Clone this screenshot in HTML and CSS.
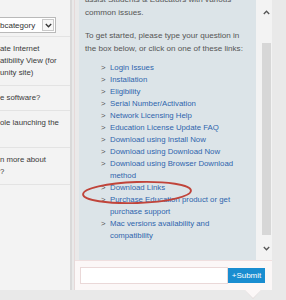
FILE: index.html
```html
<!DOCTYPE html>
<html lang="en">
<head>
    <meta charset="UTF-8">
    <meta name="viewport" content="width=device-width, initial-scale=1.0">
    <title>Support Assistant</title>
    <link rel="stylesheet" href="styles.css">
</head>
<body>

    <div class="page">
        <aside class="sidebar">
            <div class="filter">
                <div class="select">
                    <span>bcategory</span>
                    <span class="select-btn">
                        <svg width="7" height="5" viewBox="0 0 7 5"><path d="M0.8 1 L3.5 3.8 L6.2 1" fill="none" stroke="#333" stroke-width="1.3"/></svg>
                    </span>
                </div>
            </div>
            <ul class="questions">
                <li>ate Internet<br>atibility View (for<br>unity site)</li>
                <li>e software?</li>
                <li>ole launching the<br>&nbsp;</li>
                <li>n more about<br>?</li>
            </ul>
        </aside>

        <section class="chat">
            <div class="chat-body">
                <div class="messages">
                    <p class="intro">assist Students &amp; Educators with various<br>common issues.</p>
                    <p class="prompt">To get started, please type your question in<br>the box below, or click on one of these links:</p>
                    <ul class="links">
                        <li><a href="#">Login Issues</a></li>
                        <li><a href="#">Installation</a></li>
                        <li><a href="#">Eligibility</a></li>
                        <li><a href="#">Serial Number/Activation</a></li>
                        <li><a href="#">Network Licensing Help</a></li>
                        <li><a href="#">Education License Update FAQ</a></li>
                        <li><a href="#">Download using Install Now</a></li>
                        <li><a href="#">Download using Download Now</a></li>
                        <li><a href="#">Download using Browser Download method</a></li>
                        <li><a href="#">Download Links</a></li>
                        <li><a href="#">Purchase Education product or get purchase support</a></li>
                        <li><a href="#">Mac versions availability and compatibility</a></li>
                    </ul>
                </div>
                <div class="scrollbar">
                    <span class="scroll-arrow">
                        <svg width="7" height="5" viewBox="0 0 7 5"><path d="M0.8 4 L3.5 1.2 L6.2 4" fill="none" stroke="#555" stroke-width="1.3"/></svg>
                    </span>
                    <span class="scroll-thumb"></span>
                    <span class="scroll-arrow">
                        <svg width="7" height="5" viewBox="0 0 7 5"><path d="M0.8 1 L3.5 3.8 L6.2 1" fill="none" stroke="#555" stroke-width="1.3"/></svg>
                    </span>
                </div>
            </div>

            <form class="chat-input">
                <input type="text" class="chat-text">
                <button type="button" class="chat-submit">+Submit</button>
            </form>

            <svg class="mark" width="112" height="26" viewBox="0 0 112 26">
                <ellipse cx="56" cy="12.5" rx="54" ry="10.5" fill="none" stroke="#c0443a" stroke-width="1.8" transform="rotate(-2 56 12.5)"/>
            </svg>
        </section>
    </div>

</body>
</html>
```

FILE: styles.css
```css
body {
    margin: 0;
    width: 286px;
    height: 300px;
    overflow: hidden;
    background-color: #e9e9e9;
    font-family: "Liberation Sans", Arial, sans-serif;
    font-size: 7.8px;
    color: #555;
}

.page {
    display: flex;
    height: 290px;
}

/* left list of questions */

.sidebar {
    width: 70px;
    flex-shrink: 0;
    background-color: #f3f3f3;
    border-right: 2px solid #d9d9d9;
    overflow: hidden;
}

.filter {
    padding: 17px 14px 3px 0;
    border-bottom: 1px solid #e3e3e3;
}

.select {
    display: flex;
    align-items: center;
    justify-content: space-between;
    height: 14px;
    padding-right: 1px;
    background-color: #fff;
    border: 1px solid #b9b9b9;
    border-left: none;
    color: #333;
    font-size: 8px;
}

.select-btn {
    display: flex;
    align-items: center;
    justify-content: center;
    width: 10px;
    height: 10px;
    border: 1px solid #c9c9c9;
    background-color: #f7f7f7;
}

.questions {
    list-style: none;
    margin: 0;
    padding: 0;
}

.questions li {
    padding: 6px 0;
    line-height: 12px;
    color: #3a3a3a;
    white-space: nowrap;
    border-bottom: 1px solid #e3e3e3;
}

/* chat widget */

.chat {
    position: relative;
    width: 197px;
    margin-left: 2px;
    display: flex;
    flex-direction: column;
    border-left: 1px solid #e6d9d9;
}

.chat::before,
.chat::after {
    content: "";
    position: absolute;
    left: 170px;
    border-left: 8px solid transparent;
    border-right: 8px solid transparent;
}

.chat::before {
    bottom: -9px;
    border-top: 9px solid #e2d9d9;
}

.chat::after {
    bottom: -8px;
    border-top: 8px solid #fbf7f7;
}

.chat-body {
    display: flex;
    height: 260px;
    padding-left: 4px;
}

.messages {
    flex: 1;
    padding: 0 10px 0 6px;
    background-color: #dce4e8;
    overflow: hidden;
}

.messages p {
    margin: 0;
    font-size: 8.1px;
    line-height: 13px;
    white-space: nowrap;
}

.messages .intro {
    margin-top: -7px;
}

.messages .prompt {
    margin-top: 9.5px;
}

.links {
    list-style: none;
    margin: 7.5px 0 0;
    padding: 0 0 0 16px;
}

.links li {
    display: flex;
    line-height: 12px;
}

.links li::before {
    content: ">";
    flex-shrink: 0;
    width: 9px;
    color: #555;
}

.links a {
    color: #2f65ad;
    text-decoration: none;
}

.scrollbar {
    width: 9px;
    padding: 0 1px 0 6px;
    display: flex;
    flex-direction: column;
    background-color: #f3f3f3;
}

.scroll-arrow {
    display: flex;
    align-items: center;
    justify-content: center;
    height: 24px;
}

.scroll-thumb {
    flex: 1;
    margin: 19px 0 1px;
    background-color: #d7d7d7;
}

.chat-input {
    display: flex;
    align-items: flex-start;
    height: 30px;
    box-sizing: border-box;
    margin: 0;
    padding: 6px 7px 0 5px;
    background-color: #fbf7f7;
    border-top: 1px solid #efdfdf;
}

.chat-text {
    width: 148px;
    height: 17px;
    box-sizing: border-box;
    margin: 0;
    padding: 0 3px;
    border: 1px solid #ead8d8;
    background-color: #fff;
}

.chat-submit {
    width: 37px;
    height: 15px;
    margin: 1px 0 0;
    padding: 0;
    border: none;
    background-color: #1a8dd0;
    color: #fff;
    font-family: "Liberation Sans", Arial, sans-serif;
    font-size: 8px;
}

.mark {
    position: absolute;
    left: 6px;
    top: 180px;
}
```
